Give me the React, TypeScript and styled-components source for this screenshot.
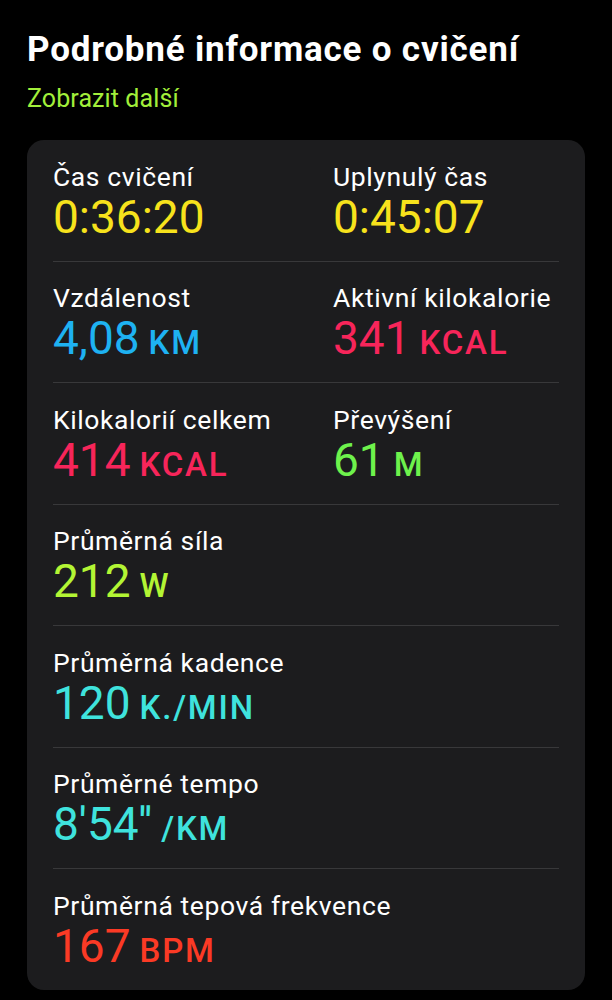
import styled, { createGlobalStyle } from 'styled-components';

const GlobalStyle = createGlobalStyle`
  html, body {
    margin: 0;
    padding: 0;
    background: #000000;
  }
  body {
    font-family: Roboto, "Liberation Sans", sans-serif;
    -webkit-font-smoothing: antialiased;
  }
`;

type Metric = {
  label: string;
  value: string;
  unit?: string;
  color: string;
};

const rows: Metric[][] = [
  [
    { label: 'Čas cvičení', value: '0:36:20', color: '#f7e21c' },
    { label: 'Uplynulý čas', value: '0:45:07', color: '#f7e21c' },
  ],
  [
    { label: 'Vzdálenost', value: '4,08', unit: 'KM', color: '#1eb2f2' },
    { label: 'Aktivní kilokalorie', value: '341', unit: 'KCAL', color: '#f7255a' },
  ],
  [
    { label: 'Kilokalorií celkem', value: '414', unit: 'KCAL', color: '#f7255a' },
    { label: 'Převýšení', value: '61', unit: 'M', color: '#6ef24c' },
  ],
  [{ label: 'Průměrná síla', value: '212', unit: 'W', color: '#b3f534' }],
  [{ label: 'Průměrná kadence', value: '120', unit: 'K./MIN', color: '#3fe3dd' }],
  [{ label: 'Průměrné tempo', value: "8'54''", unit: '/KM', color: '#3fe3dd' }],
  [{ label: 'Průměrná tepová frekvence', value: '167', unit: 'BPM', color: '#fb3a25' }],
];

function App() {
  return (
    <Page>
      <GlobalStyle />
      <Title>Podrobné informace o cvičení</Title>
      <MoreLink>Zobrazit další</MoreLink>
      <Card>
        {rows.map((row, i) => (
          <Row key={i}>
            {row.map((m) => (
              <Cell key={m.label}>
                <Label>{m.label}</Label>
                <Value color={m.color}>
                  {m.value}
                  {m.unit && <Unit>{m.unit}</Unit>}
                </Value>
              </Cell>
            ))}
          </Row>
        ))}
      </Card>
    </Page>
  );
}

export default App;

const Page = styled.div`
  width: 612px;
  min-height: 1000px;
  box-sizing: border-box;
  padding: 29px 27px 0 27px;
  background: #000000;
`;

const Title = styled.h1`
  margin: 0;
  font-size: 35px;
  line-height: 42px;
  font-weight: 700;
  color: #ffffff;
  letter-spacing: 0.8px;
`;

const MoreLink = styled.div`
  margin-top: 13px;
  font-size: 25px;
  line-height: 30px;
  color: #a2ef3a;
  letter-spacing: 0.1px;
`;

const Card = styled.div`
  margin-top: 26px;
  background: #1c1c1e;
  border-radius: 17px;
  padding: 0 26px;
`;

const Row = styled.div`
  display: grid;
  grid-template-columns: 280px 1fr;
  padding: 21.5px 0 20px;
  border-bottom: 1px solid #38383a;

  &:last-child {
    border-bottom: none;
  }
`;

const Cell = styled.div`
  display: flex;
  flex-direction: column;
  gap: 1px;
  white-space: nowrap;
`;

const Label = styled.div`
  font-size: 26.5px;
  line-height: 30px;
  color: #ffffff;
  letter-spacing: 0.6px;
`;

const Value = styled.div<{ color: string }>`
  height: 48px;
  font-size: 46px;
  line-height: 48px;
  color: ${({ color }) => color};
`;

const Unit = styled.span`
  margin-left: 9px;
  font-size: 33px;
  line-height: 1;
  font-weight: 500;
  letter-spacing: 1.8px;
`;
